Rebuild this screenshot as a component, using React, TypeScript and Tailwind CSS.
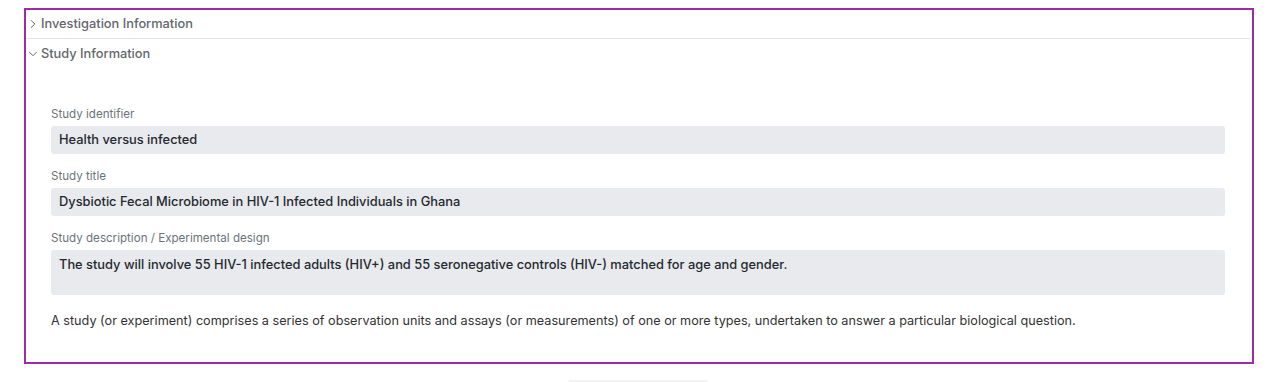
import { ChevronRight, ChevronDown } from 'lucide-react';

const fields = [
  { label: 'Study identifier', value: 'Health versus infected', tall: false },
  { label: 'Study title', value: 'Dysbiotic Fecal Microbiome in HIV-1 Infected Individuals in Ghana', tall: false },
  {
    label: 'Study description / Experimental design',
    value: 'The study will involve 55 HIV-1 infected adults (HIV+) and 55 seronegative controls (HIV-) matched for age and gender.',
    tall: true,
  },
];

export default function App() {
  return (
    <div className="w-[1274px] h-[382px] bg-white overflow-hidden font-['Inter',sans-serif]">
      <div className="ml-[24px] mt-[8px] w-[1230px] h-[356px] border-2 border-[#9c2ba8]">
        {/* Collapsed section */}
        <div className="flex items-center h-[29px] pl-[0px] mr-[2px] border-b border-[#e5e5e5]">
          <ChevronRight className="w-[14px] h-[14px] text-[#555]" strokeWidth={1.5} />
          <span className="ml-[1px] text-[12.8px] font-medium text-[#63676d]">Investigation Information</span>
        </div>

        {/* Expanded section */}
        <div className="flex items-center h-[29px] pl-[0px]">
          <ChevronDown className="w-[14px] h-[14px] text-[#555]" strokeWidth={1.5} />
          <span className="ml-[1px] text-[12.8px] font-medium text-[#63676d]">Study Information</span>
        </div>

        <div className="pl-[25px] pr-[27px] pt-[38px]">
          {fields.map((f) => (
            <div key={f.label} className="mb-[14px]">
              <div className="h-[16px] leading-[16px] text-[11.6px] text-[#6c737a]">{f.label}</div>
              <div
                className={`mt-[4px] bg-[#e8eaed] rounded-[3px] px-[8px] text-[12.85px] font-medium text-[#24292f] ${
                  f.tall ? 'h-[45px] pt-[6px] leading-[18px]' : 'h-[28px] leading-[28px]'
                }`}
              >
                {f.value}
              </div>
            </div>
          ))}
          <p className="mt-[16px] text-[12.66px] leading-[20px] text-[#333]">
            A study (or experiment) comprises a series of observation units and assays (or measurements) of one or more types, undertaken to answer a particular biological question.
          </p>
        </div>
      </div>
      <div className="mt-[16px] ml-[568px] w-[140px] h-[10px] bg-[#f3f3f3] rounded-t-[3px]" />
    </div>
  );
}
